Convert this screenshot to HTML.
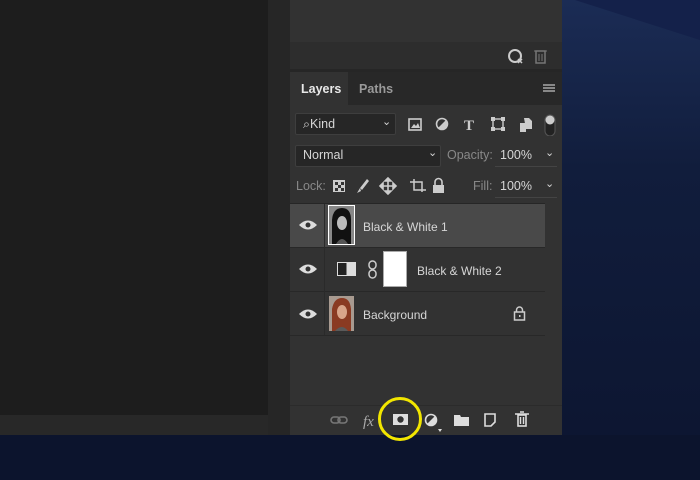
<!DOCTYPE html>
<html><head><style>
*{margin:0;padding:0;box-sizing:border-box}
body{width:700px;height:480px;overflow:hidden;background:#0b1226;font-family:"Liberation Sans",sans-serif;position:relative;color:#ccc}
.a{position:absolute}
.t{font-size:12px;color:#d6d6d6}
</style></head><body>
<svg class="a" style="left:0;top:0" width="700" height="480">
<defs><linearGradient id="g" x1="0" y1="0" x2="0" y2="1"><stop offset="0" stop-color="#1b2c55"/><stop offset="0.35" stop-color="#111d3c"/><stop offset="1" stop-color="#0c1530"/></linearGradient></defs>
<rect width="700" height="480" fill="url(#g)"/>
<polygon points="575,0 700,0 700,40" fill="#14214a"/>
<rect x="0" y="435" width="700" height="45" fill="#0c142d"/>
</svg>
<div class="a" style="left:0;top:0;width:268px;height:415px;background:#1d1d1d"></div>
<div class="a" style="left:0;top:415px;width:268px;height:20px;background:#282828"></div>
<div class="a" style="left:268px;top:0;width:22px;height:435px;background:#262626"></div>
<div class="a" style="left:290px;top:0;width:272px;height:435px;background:#323232"></div>
<div class="a" style="left:290px;top:42px;width:272px;height:27px;background:#2d2d2d"></div>
<div class="a" style="left:290px;top:69px;width:272px;height:3px;background:#262626"></div>
<svg class="a" style="left:505px;top:47px" width="45" height="18"><circle cx="10" cy="9" r="6" fill="none" stroke="#ccc" stroke-width="2"/><path d="M13 12l4 4M17 12l-4 4" stroke="#ccc" stroke-width="1.5"/><rect x="31" y="4" width="9" height="12" fill="none" stroke="#777" stroke-width="1.5"/><path d="M29 4h13M34 7v7M37 7v7" stroke="#777"/></svg>
<div class="a" style="left:290px;top:72px;width:272px;height:33px;background:#282828"></div>
<div class="a" style="left:290px;top:72px;width:58px;height:33px;background:#323232"></div>
<div class="a t" style="left:301px;top:82px;font-weight:bold;font-size:12.5px;color:#e8e8e8">Layers</div>
<div class="a t" style="left:359px;top:82px;font-weight:bold;font-size:12.5px;color:#9a9a9a">Paths</div>
<div class="a" style="left:543px;top:84px;width:12px;height:8px;border-top:2px solid #888;border-bottom:2px solid #888"></div>
<div class="a" style="left:543px;top:87px;width:12px;height:2px;background:#888"></div>
<div class="a" style="left:295px;top:113px;width:101px;height:22px;background:#262626;border:1px solid #3e3e3e;border-radius:2px"></div>
<div class="a t" style="left:303px;top:117px;font-size:12.5px">&#x2315;Kind</div>
<div class="a t" style="left:382px;top:115px;font-size:11px">&#8964;</div>
<svg class="a" style="left:405px;top:114px" width="160" height="22">
<rect x="4" y="5" width="12" height="11" fill="none" stroke="#ccc" stroke-width="1.6"/><path d="M6 14l3-4 2 2 2-3 2 5z" fill="#ccc"/>
<circle cx="37" cy="10" r="5.5" fill="none" stroke="#ccc" stroke-width="1.6"/><path d="M37 4.5a5.5 5.5 0 0 1 0 11z" fill="#ccc" transform="rotate(45 37 10)"/>
<text x="59" y="16" font-size="15" font-family="Liberation Serif" fill="#ccc" font-weight="bold">T</text>
<rect x="88" y="5" width="10" height="10" fill="none" stroke="#ccc" stroke-width="1.4"/><rect x="86" y="3" width="4" height="4" fill="#ccc"/><rect x="96" y="3" width="4" height="4" fill="#ccc"/><rect x="86" y="13" width="4" height="4" fill="#ccc"/><rect x="96" y="13" width="4" height="4" fill="#ccc"/>
<path d="M115 9h6v9h-6zM119 4h5l3 3v8h-6z" fill="#ccc"/>
<rect x="140" y="1" width="10" height="21" rx="5" fill="#222" stroke="#555"/><circle cx="145" cy="6" r="4.5" fill="#ccc"/>
</svg>
<div class="a" style="left:295px;top:145px;width:146px;height:22px;background:#262626;border:1px solid #3e3e3e;border-radius:2px"></div>
<div class="a t" style="left:303px;top:148px;font-size:12.5px">Normal</div>
<div class="a t" style="left:428px;top:146px;font-size:11px">&#8964;</div>
<div class="a t" style="left:447px;top:148px;font-size:12.5px;color:#888">Opacity:</div>
<div class="a t" style="left:500px;top:148px;font-size:12.5px">100%</div>
<div class="a t" style="left:545px;top:146px;font-size:11px">&#8964;</div>
<div class="a" style="left:495px;top:166px;width:62px;height:1px;background:#444"></div>
<div class="a t" style="left:296px;top:179px;font-size:12.5px;color:#888">Lock:</div>
<svg class="a" style="left:330px;top:176px" width="120" height="20">
<rect x="3" y="4" width="12" height="12" fill="#ccc"/><path d="M5 6h3v3H5zM11 6h3v3h-3zM8 9h3v3H8zM5 12h3v3H5zM11 12h3v3h-3z" fill="#333"/>
<path d="M37 3l-7 9 2 2 7-9z M30 12l-3 5 4-2z" fill="#ccc"/>
<path d="M58 3v14M51 10h14M58 2l-3 3h6zM58 18l-3-3h6zM50 10l3-3v6zM66 10l-3-3v6z" stroke="#ccc" stroke-width="1.6" fill="#ccc"/>
<path d="M80 6h12v10M84 3v11h12" fill="none" stroke="#ccc" stroke-width="1.5"/>
<rect x="103" y="9" width="11" height="8" fill="#ccc"/><path d="M105 9V6a3.5 3.5 0 0 1 7 0v3" fill="none" stroke="#ccc" stroke-width="1.6"/>
</svg>
<div class="a t" style="left:473px;top:179px;font-size:12.5px;color:#888">Fill:</div>
<div class="a t" style="left:500px;top:179px;font-size:12.5px">100%</div>
<div class="a t" style="left:545px;top:177px;font-size:11px">&#8964;</div>
<div class="a" style="left:495px;top:197px;width:62px;height:1px;background:#444"></div>
<div class="a" style="left:290px;top:203px;width:255px;height:1px;background:#262626"></div>
<div class="a" style="left:290px;top:204px;width:255px;height:43px;background:#494949"></div>
<div class="a" style="left:290px;top:247px;width:255px;height:1px;background:#282828"></div>
<div class="a" style="left:290px;top:291px;width:255px;height:1px;background:#282828"></div>
<div class="a" style="left:290px;top:335px;width:255px;height:1px;background:#282828"></div>
<div class="a" style="left:324px;top:204px;width:1px;height:131px;background:#2a2a2a"></div>
<svg class="a" style="left:298px;top:218px" width="20" height="110"><g fill="#ddd"><path d="M1 7q9-9 18 0q-9 9-18 0z"/><path d="M1 51q9-9 18 0q-9 9-18 0z"/><path d="M1 96q9-9 18 0q-9 9-18 0z"/></g><g fill="#333"><circle cx="10" cy="7" r="2.5"/><circle cx="10" cy="51" r="2.5"/><circle cx="10" cy="96" r="2.5"/></g></svg>
<div class="a" style="left:328px;top:205px;width:27px;height:40px;background:#777;border:1px solid #fff"></div>
<svg class="a" style="left:329px;top:206px" width="25" height="38"><rect width="25" height="38" fill="#888"/><path d="M3 38V14Q4 2 13 2Q22 2 22 14V38z" fill="#111"/><ellipse cx="13" cy="17" rx="5" ry="7" fill="#bbb"/><path d="M7 38q6-10 12 0" fill="#555"/></svg>
<div class="a t" style="left:363px;top:220px">Black &amp; White 1</div>
<div class="a" style="left:337px;top:262px;width:19px;height:14px;border:1.5px solid #ddd;background:linear-gradient(90deg,#222 50%,#ddd 50%)"></div>
<svg class="a" style="left:367px;top:259px" width="12" height="22"><rect x="2" y="2" width="7" height="8" rx="3.5" fill="none" stroke="#ccc" stroke-width="1.5"/><rect x="2" y="11" width="7" height="8" rx="3.5" fill="none" stroke="#ccc" stroke-width="1.5"/></svg>
<div class="a" style="left:383px;top:251px;width:24px;height:36px;background:#fff;border:1px solid #aaa"></div>
<div class="a t" style="left:417px;top:264px">Black &amp; White 2</div>
<svg class="a" style="left:329px;top:296px" width="25" height="35"><rect width="25" height="35" fill="#a89a90"/><path d="M3 35V13Q5 2 13 2Q21 2 22 13V35z" fill="#8a3a22"/><ellipse cx="13" cy="16" rx="5" ry="7" fill="#d9a58a"/><path d="M6 35q7-8 13 0" fill="#5a5a5a"/></svg>
<div class="a t" style="left:363px;top:308px">Background</div>
<svg class="a" style="left:513px;top:305px" width="14" height="16"><rect x="1.5" y="7" width="10" height="8" fill="none" stroke="#ccc" stroke-width="1.5"/><path d="M3.5 7V5a3 3 0 0 1 6 0v2" fill="none" stroke="#ccc" stroke-width="1.5"/><rect x="6" y="10" width="1.5" height="2" fill="#ccc"/></svg>
<div class="a" style="left:290px;top:405px;width:272px;height:1px;background:#2b2b2b"></div>
<svg class="a" style="left:325px;top:405px" width="210" height="30">
<g fill="none" stroke="#777" stroke-width="1.6"><rect x="6" y="12" width="9" height="6" rx="3"/><rect x="13" y="12" width="9" height="6" rx="3"/></g>
<text x="38" y="21" font-size="15" font-style="italic" fill="#aaa" font-family="Liberation Serif">fx</text>
<rect x="68" y="9" width="15" height="11" fill="#ddd"/><circle cx="75.5" cy="14.5" r="3.2" fill="#323232"/>
<circle cx="106" cy="15" r="5.5" fill="none" stroke="#ddd" stroke-width="1.6"/><path d="M106 9.5a5.5 5.5 0 0 1 0 11z" fill="#ddd" transform="rotate(45 106 15)"/><path d="M113 24l2 3 2-3z" fill="#ddd"/>
<path d="M129 10h6l1 2h8v9h-15z" fill="#ddd"/>
<path d="M160 9h10v8l-4 4h-6z" fill="none" stroke="#ddd" stroke-width="1.6"/>
<rect x="193" y="10" width="8" height="11" fill="none" stroke="#ddd" stroke-width="1.6"/><path d="M190 9h14M195 7h4M195.5 12v7M198.5 12v7" stroke="#ddd" stroke-width="1.4"/>
</svg>
<div class="a" style="left:378px;top:397px;width:44px;height:44px;border:3px solid #f2e600;border-radius:50%"></div>
</body></html>
